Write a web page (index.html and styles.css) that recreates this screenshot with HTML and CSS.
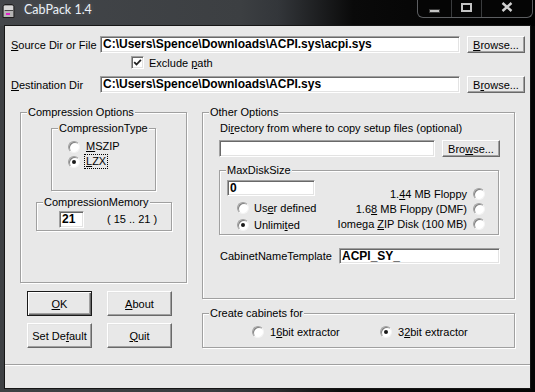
FILE: index.html
```
<!DOCTYPE html>
<html>
<head>
<meta charset="utf-8">
<title>CabPack 1.4</title>
<link rel="stylesheet" href="styles.css">
</head>
<body>
<div class="window">
  <div class="titlebar">
    <svg class="app-icon" width="13" height="16" viewBox="0 0 13 16">
      <path d="M2.5 1.5h8l1.5 2v11h-11v-11z" fill="#9a9a9a" stroke="#1e1e1e"/>
      <rect x="2" y="3" width="9" height="4" fill="#d6d6d6"/>
      <rect x="2" y="8" width="9" height="6" fill="#b4b4b4"/>
      <rect x="4" y="10" width="4" height="2" fill="#e020c8"/>
      <rect x="3" y="7" width="8" height="1" fill="#4a4a4a"/>
    </svg>
    <span class="title">CabPack 1.4</span>
    <div class="caption-btns">
      <span class="cbtn cbtn-min">
        <svg width="11" height="4" viewBox="0 0 11 4"><rect x="0.5" y="0.5" width="10" height="3" fill="#c4c4c4" stroke="#3a3a3a"/></svg>
      </span>
      <span class="cbtn cbtn-max">
        <svg width="11" height="9" viewBox="0 0 11 9"><rect x="1" y="1" width="9" height="7" fill="none" stroke="#c4c4c4" stroke-width="2"/></svg>
      </span>
      <span class="cbtn cbtn-close">
        <svg width="12" height="10" viewBox="0 0 12 10"><path d="M1.5 1l9 8M10.5 1l-9 8" stroke="#d0d0d0" stroke-width="2.4" fill="none"/></svg>
      </span>
    </div>
  </div>

  <div class="client">
    <div class="row row-source">
      <span class="lbl"><u>S</u>ource Dir or File</span>
      <div class="field path">C:\Users\Spence\Downloads\ACPI.sys\acpi.sys</div>
      <div class="btn browse"><u>B</u>rowse...</div>
    </div>
    <div class="row row-check">
      <span class="check"><svg width="11" height="11" viewBox="0 0 11 11"><path d="M2.2 5.2l2.3 2.3 4.4-4.6" fill="none" stroke="#222" stroke-width="1.8"/></svg></span>
      <span class="check-text">Exclude <u>p</u>ath</span>
    </div>
    <div class="row row-dest">
      <span class="lbl"><u>D</u>estination Dir</span>
      <div class="field path">C:\Users\Spence\Downloads\ACPI.sys</div>
      <div class="btn browse">B<u>r</u>owse...</div>
    </div>

    <div class="main">
      <div class="col-left">
        <div class="group g-compress">
          <span class="gtitle">Compression Options</span>
          <div class="group g-type">
            <span class="gtitle">CompressionType</span>
            <div class="radio-row"><span class="radio"></span><span class="rlabel"><u>M</u>SZIP</span></div>
            <div class="radio-row"><span class="radio on"></span><span class="rlabel focus"><u>L</u>ZX</span></div>
          </div>
          <div class="group g-memory">
            <span class="gtitle">CompressionMemory</span>
            <div class="field num">21</div>
            <span class="range">( 15 .. 21 )</span>
          </div>
        </div>
        <div class="btn-grid">
          <div class="btn push default"><u>O</u>K</div>
          <div class="btn push"><u>A</u>bout</div>
          <div class="btn push">Set De<u>f</u>ault</div>
          <div class="btn push"><u>Q</u>uit</div>
        </div>
      </div>

      <div class="col-right">
        <div class="group g-other">
          <span class="gtitle">Other Options</span>
          <div class="dir-label">Di<u>r</u>ectory from where to copy setup files (optional)</div>
          <div class="dir-row">
            <div class="field dir"></div>
            <div class="btn browse">Bro<u>w</u>se...</div>
          </div>
          <div class="group g-maxdisk">
            <span class="gtitle">MaxDiskSize</span>
            <div class="md-left">
              <div class="field md">0</div>
              <div class="radio-row md-r1"><span class="radio"></span><span class="rtext">Us<u>e</u>r defined</span></div>
              <div class="radio-row md-r2"><span class="radio on"></span><span class="rtext">Unlimi<u>t</u>ed</span></div>
            </div>
            <div class="md-right">
              <div class="radio-row"><span class="rtext-r">1.<u>4</u>4 MB Floppy</span><span class="radio"></span></div>
              <div class="radio-row"><span class="rtext-r">1.6<u>8</u> MB Floppy (DMF)</span><span class="radio"></span></div>
              <div class="radio-row"><span class="rtext-r">Iomega <u>Z</u>IP Disk (100 MB)</span><span class="radio"></span></div>
            </div>
          </div>
          <div class="cab-row">
            <span class="cab-label">CabinetNameTemplate</span>
            <div class="field cab">ACPI_SY_</div>
          </div>
        </div>

        <div class="group g-create">
          <span class="gtitle">Create cabinets for</span>
          <div class="radio-row c16"><span class="radio"></span><span class="ctext">1<u>6</u>bit extractor</span></div>
          <div class="radio-row c32"><span class="radio on"></span><span class="ctext">3<u>2</u>bit extractor</span></div>
        </div>
      </div>
    </div>

    <div class="separator"></div>
    <div class="statusbar"></div>
  </div>
</div>
</body>
</html>
```

FILE: styles.css
```
html, body {
  margin: 0;
  padding: 0;
}
body {
  width: 535px;
  height: 392px;
  overflow: hidden;
  background: #2c2e31;
  font-family: "Liberation Sans", Arial, sans-serif;
  font-size: 11px;
  color: #000;
}
.window {
  display: flex;
  flex-direction: column;
  height: 392px;
  background: linear-gradient(90deg, #3e4144 0%, #393c3f 40%, #2e3032 50%, #0c0c0c 64%, #050505 100%);
}

/* title bar */
.titlebar {
  height: 26px;
  flex: none;
  display: flex;
  align-items: flex-start;
  background: linear-gradient(90deg, #43464a 0%, #3c3f42 45%, #33363a 52%, #0a0a0a 66%, #000 100%);
}
.app-icon {
  flex: none;
  margin: 3px 0 0 2px;
}
.title {
  margin: 2px 0 0 9px;
  font-family: Lato, "Open Sans", sans-serif;
  font-size: 12.5px;
  line-height: 16px;
  color: #eaf1f8;
  text-shadow: 0 0 5px rgba(255, 255, 255, 0.18);
}
.caption-btns {
  margin-left: auto;
  margin-right: 2px;
  display: flex;
  height: 18px;
  box-sizing: border-box;
  border: 1px solid #5c5e61;
  border-top: 0;
  border-radius: 0 0 6px 6px;
  background: #050505;
}
.cbtn {
  display: flex;
  align-items: center;
  justify-content: center;
  height: 17px;
  box-sizing: border-box;
}
.cbtn-min { width: 33px; padding-top: 4px; }
.cbtn-max { width: 30px; border-left: 1px solid #3a3c3e; padding-bottom: 3px; }
.cbtn-close { width: 51px; border-left: 1px solid #3a3c3e; padding-bottom: 3px; }

/* client area */
.client {
  margin: 0 5px;
  height: 362px;
  flex: none;
  background: #e8e8e8;
  display: flex;
  flex-direction: column;
  box-shadow: 0 0 0 1px #161616;
}
.row {
  display: flex;
  align-items: center;
}
.row-source { margin-top: 10px; height: 17px; }
.row-check { margin-top: 3px; height: 13px; padding-left: 126px; }
.row-dest { margin-top: 7px; height: 17px; }
.lbl {
  width: 95px;
  box-sizing: border-box;
  padding-left: 6px;
  white-space: nowrap;
}

/* fields */
.field {
  box-sizing: border-box;
  background: #fff;
  border: 1px solid;
  border-color: #a0a0a0 #fff #fff #a0a0a0;
  box-shadow: inset 1px 1px 0 #696969, inset -1px -1px 0 #e3e3e3;
  font-weight: bold;
  font-size: 12px;
  padding-left: 2px;
  white-space: nowrap;
  overflow: hidden;
  flex: none;
}
.field.path { width: 360px; height: 17px; line-height: 15px; }
.field.num { width: 25px; height: 17px; line-height: 15px; margin: 8px 0 0 22px; }
.field.dir { width: 216px; height: 17px; }
.field.md { width: 88px; height: 16px; line-height: 14px; }
.field.cab { width: 161px; height: 16px; line-height: 14px; }

/* buttons */
.btn {
  box-sizing: border-box;
  display: flex;
  align-items: center;
  justify-content: center;
  border: 1px solid;
  border-color: #fff #696969 #696969 #fff;
  box-shadow: inset -1px -1px 0 #a0a0a0, inset 1px 1px 0 #e3e3e3;
  background: #e8e8e8;
  white-space: nowrap;
  flex: none;
}
.btn.browse { margin-left: 7px; width: 58px; height: 17px; }
.btn.default {
  border-color: #1a1a1a;
  box-shadow: inset 1px 1px 0 #fff, inset -1px -1px 0 #696969, inset -2px -2px 0 #a0a0a0;
}

/* checkbox */
.check {
  width: 13px;
  height: 13px;
  box-sizing: border-box;
  border: 1px solid;
  border-color: #a0a0a0 #fff #fff #a0a0a0;
  box-shadow: inset 1px 1px 0 #696969, inset -1px -1px 0 #e3e3e3;
  background: #fff;
  display: flex;
  flex: none;
}
.check svg { margin: 0; }
.check-text { margin-left: 5px; }

/* radios */
.radio-row {
  display: flex;
  align-items: center;
  height: 15px;
}
.radio {
  position: relative;
  box-sizing: border-box;
  width: 12px;
  height: 12px;
  flex: none;
  border-radius: 50%;
  background: #fff;
  border: 1px solid;
  border-color: #a0a0a0 #f4f4f4 #f4f4f4 #a0a0a0;
  box-shadow: inset 1px 1px 0 #808080;
}
.radio.on::after {
  content: "";
  position: absolute;
  left: 3px;
  top: 3px;
  width: 4px;
  height: 4px;
  border-radius: 50%;
  background: #1a1a1a;
}

/* group boxes */
.group {
  position: relative;
  box-sizing: border-box;
  border: 1px solid #a0a0a0;
  box-shadow: inset 1px 1px 0 #fff, 1px 1px 0 #fff;
}
.gtitle {
  position: absolute;
  top: -7px;
  left: 6px;
  padding: 0 1px;
  line-height: 13px;
  background: #e8e8e8;
  white-space: nowrap;
}

.main {
  display: flex;
  margin-top: 19px;
  padding-left: 15px;
}
.col-left { width: 167px; flex: none; }
.col-right { width: 313px; flex: none; margin-left: 15px; }

.g-compress { height: 171px; }
.g-type {
  margin: 15px 0 0 30px;
  width: 105px;
  height: 63px;
  padding: 10px 0 0 16px;
}
.rlabel {
  margin-left: 4px;
  padding: 0 1px;
  line-height: 13px;
  border: 1px solid transparent;
}
.rlabel.focus { border: 1px dotted #000; }
.g-memory {
  margin: 11px 0 0 15px;
  width: 136px;
  height: 29px;
  display: flex;
  align-items: flex-start;
}
.range {
  margin: 10px 0 0 23px;
  line-height: 13px;
  white-space: nowrap;
}

.btn-grid {
  margin: 8px 0 0 7px;
  display: grid;
  grid-template-columns: 65px 65px;
  grid-auto-rows: 25px;
  column-gap: 15px;
  row-gap: 7px;
}

.g-other { height: 187px; }
.dir-label {
  margin: 9px 0 0 17px;
  line-height: 13px;
  white-space: nowrap;
}
.dir-row {
  display: flex;
  margin: 5px 0 0 16px;
}
.g-maxdisk {
  margin: 13px 0 0 16px;
  width: 280px;
  height: 65px;
  display: flex;
  justify-content: space-between;
}
.md-left { padding: 9px 0 0 7px; }
.md-r1 { margin: 4px 0 0 10px; }
.md-r2 { margin: 2px 0 0 10px; }
.rtext { margin-left: 5px; white-space: nowrap; }
.md-right {
  padding: 15px 13px 0 0;
  display: flex;
  flex-direction: column;
  align-items: flex-end;
}
.rtext-r { margin-right: 6px; white-space: nowrap; }
.cab-row {
  display: flex;
  align-items: center;
  margin: 13px 0 0 17px;
  height: 16px;
}
.cab-label { width: 119px; flex: none; }

.g-create {
  margin-top: 14px;
  height: 35px;
  display: flex;
  align-items: flex-start;
  padding: 10px 0 0 49px;
}
.c16 { width: 128px; }
.ctext { margin-left: 6px; white-space: nowrap; }

.separator {
  margin-top: auto;
  height: 2px;
  box-sizing: border-box;
  border-top: 1px solid #a0a0a0;
  border-bottom: 1px solid #fff;
}
.statusbar { height: 22px; }
```
